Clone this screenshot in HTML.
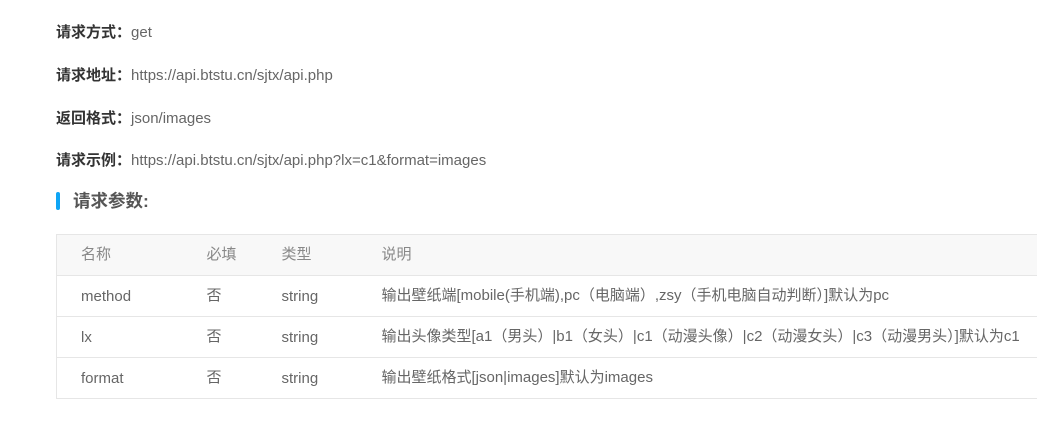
<!DOCTYPE html>
<html><head><meta charset="utf-8"><style>
body{margin:0;width:1037px;height:421px;overflow:hidden;background:#fff;font-family:"Liberation Sans","Noto Sans CJK SC",sans-serif;font-size:15px;color:#666}
.p{position:absolute;left:56px;white-space:nowrap;line-height:20px}
.p b{color:#333;font-weight:bold}
.h{position:absolute;left:56px;top:192px;height:18px}
.h i{position:absolute;left:0;top:0;width:4px;height:18px;background:#0ea5f5;border-radius:2px}
.h span{position:absolute;left:17px;top:-2px;font-size:17.5px;font-weight:bold;color:#555;white-space:nowrap;line-height:22px}
table{position:absolute;left:56px;top:234px;width:1000px;border-collapse:collapse;border:1px solid #e6e6e6}
td{height:40px;border-top:1px solid #e6e6e6;padding:0;white-space:nowrap;color:#666;line-height:20px;vertical-align:middle}
td.l{padding-top:2px;height:38px}
tr.hd td{background:#f8f8f8;color:#888}
</style></head><body>
<div class="p" style="top:23px"><b>请求方式：</b>get</div>
<div class="p" style="top:66px"><b>请求地址：</b>https://api.btstu.cn/sjtx/api.php</div>
<div class="p" style="top:109px"><b>返回格式：</b>json/images</div>
<div class="p" style="top:151px"><b>请求示例：</b>https://api.btstu.cn/sjtx/api.php?lx=c1&amp;format=images</div>
<div class="h"><i></i><span>请求参数:</span></div>
<table>
<colgroup><col style="width:150px"><col style="width:75px"><col style="width:100px"><col></colgroup>
<tr class="hd"><td style="padding-left:24px">名称</td><td>必填</td><td>类型</td><td>说明</td></tr>
<tr><td class="l" style="padding-left:24px">method</td><td>否</td><td class="l">string</td><td>输出壁纸端[mobile(手机端),pc（电脑端）,zsy（手机电脑自动判断）]默认为pc</td></tr>
<tr><td class="l" style="padding-left:24px">lx</td><td>否</td><td class="l">string</td><td>输出头像类型[a1（男头）|b1（女头）|c1（动漫头像）|c2（动漫女头）|c3（动漫男头）]默认为c1</td></tr>
<tr><td class="l" style="padding-left:24px">format</td><td>否</td><td class="l">string</td><td>输出壁纸格式[json|images]默认为images</td></tr>
</table>
</body></html>
